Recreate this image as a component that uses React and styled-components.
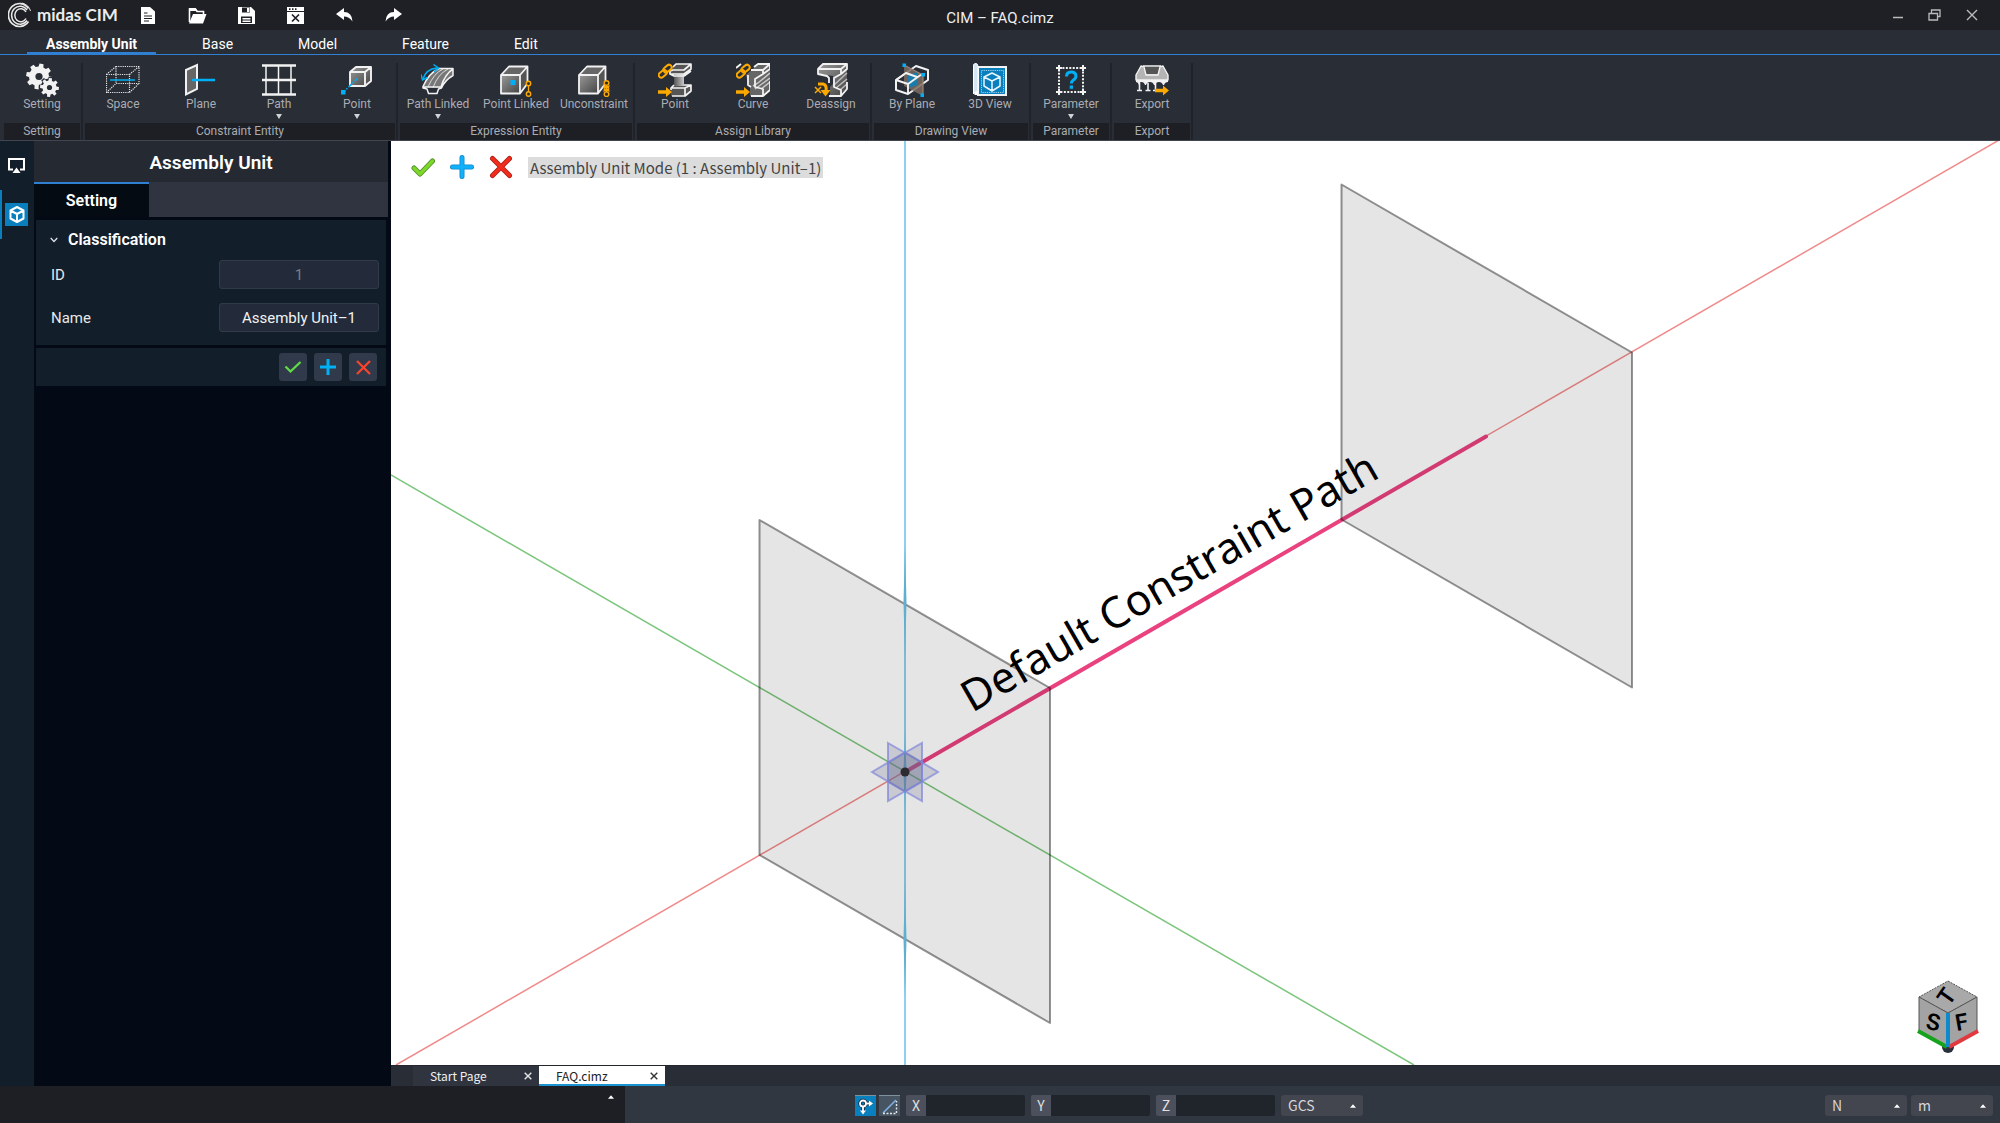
import React from "react";
import styled, { createGlobalStyle } from "styled-components";

const ui = `Roboto, "Noto Sans CJK KR", sans-serif`;
const doc = `"Noto Sans CJK KR", "Noto Sans", sans-serif`;
const scene = `"Noto Sans", "Open Sans", sans-serif`;

const c = {
  title: "#1f2025",
  bar: "#292d36",
  line: "#2f7fd3",
  caption: "#1e1f24",
  label: "#a9acb2",
  rail: "#131e2b",
  panel: "#030a16",
  card: "#131e2b",
  field: "#232b3a",
  fieldLine: "#303a49",
  status: "#313741",
  accent: "#0a7fbd",
  cyan: "#00b0f6",
  orange: "#fba800",
};

const Global = createGlobalStyle`
  *, *::before, *::after { box-sizing: border-box; }
  html, body { margin: 0; }
  body { background: ${c.panel}; font-family: ${ui}; color: #fff; overflow: hidden; }
  button, input, select { font: inherit; color: inherit; margin: 0; padding: 0; border: 0; background: none; border-radius: 0; }
  svg { display: block; flex: none; }
`;

const Shell = styled.div`
  display: flex;
  flex-direction: column;
  height: 100vh;
`;

/* ---------- title bar ---------- */

const TitleBar = styled.header`
  display: grid;
  grid-template-columns: 1fr auto 1fr;
  align-items: center;
  height: 30px;
  flex: none;
  background: ${c.title};
`;
const TitleLeft = styled.div`
  display: flex;
  align-items: center;
  padding-left: 8px;
`;
const Brand = styled.div`
  display: flex;
  align-items: center;
  gap: 5px;
  width: 116px;
  font: 700 17px/20px Lato, sans-serif;
  color: #ececec;
  white-space: nowrap;
`;
const QuickBar = styled.div`
  display: flex;
`;
const QuickButton = styled.button`
  display: flex;
  justify-content: center;
  width: 49px;
  height: 20px;
`;
const DocTitle = styled.h1`
  margin: 0;
  padding-top: 6px;
  font-size: 15px;
  line-height: 20px;
  font-weight: 400;
  color: #eee;
`;
const WindowButtons = styled.div`
  display: flex;
  justify-content: flex-end;
  padding-right: 10px;
`;
const WindowButton = styled.button`
  display: flex;
  align-items: center;
  justify-content: center;
  width: 37px;
  height: 28px;
`;

/* ---------- menu ---------- */

const Menu = styled.nav`
  display: flex;
  gap: 27px;
  height: 25px;
  flex: none;
  padding-left: 27px;
  background: ${c.bar};
  border-bottom: 1px solid ${c.line};
`;
const MenuItem = styled.button`
  height: 24px;
  padding: 6px 19px 0;
  font-size: 14px;
  line-height: 16px;
  font-weight: ${(p) => (p.$on ? 700 : 400)};
  border-bottom: 2px solid ${(p) => (p.$on ? c.line : "transparent")};
`;

/* ---------- ribbon ---------- */

const Ribbon = styled.div`
  display: flex;
  height: 86px;
  flex: none;
  padding: 8px 0 0 3px;
  background: ${c.bar};
  border-bottom: 1px solid #41454f;
`;
const Group = styled.section`
  display: flex;
  flex-direction: column;
  height: 77px;
  margin-right: 1px;
  border-right: 2px solid #20232a;
`;
const Tools = styled.div`
  display: flex;
  flex: 1;
`;
const Caption = styled.h2`
  margin: 0 1px;
  background: ${c.caption};
  color: ${c.label};
  font-size: 12px;
  line-height: 17px;
  font-weight: 400;
  text-align: center;
`;
const Tool = styled.button`
  display: flex;
  flex-direction: column;
  align-items: center;
  width: 78px;
  height: 59px;
  color: ${c.label};
  font-size: 12px;
  line-height: 14px;
  white-space: nowrap;
`;
const ToolText = styled.span`
  padding-bottom: 3px;
`;

/* ---------- body ---------- */

const Body = styled.div`
  display: flex;
  flex: 1;
  min-height: 0;
`;
const Rail = styled.nav`
  width: 34px;
  flex: none;
  background: ${c.rail};
`;
const RailButton = styled.button`
  display: flex;
  align-items: center;
  width: 100%;
  height: 49px;
  padding-left: 3px;
  border-left: 2px solid ${(p) => (p.$on ? c.accent : "transparent")};
`;
const RailIcon = styled.span`
  display: flex;
  align-items: center;
  justify-content: center;
  width: 23px;
  height: 23px;
  background: ${(p) => (p.$on ? c.accent : "none")};
`;
const Panel = styled.aside`
  display: flex;
  flex-direction: column;
  width: 357px;
  flex: none;
  padding-right: 3px;
  background: ${c.panel};
`;
const PanelTitle = styled.h2`
  margin: 0;
  padding-top: 2px;
  background: #252932;
  font-size: 19px;
  line-height: 39px;
  font-weight: 600;
  text-align: center;
`;
const PanelTabs = styled.div`
  display: flex;
  height: 35px;
  flex: none;
  background: #2f3440;
`;
const PanelTab = styled.button`
  width: 115px;
  background: #040b13;
  border-top: 2px solid ${c.line};
  font-size: 16px;
  line-height: 20px;
  font-weight: 600;
`;
const Card = styled.section`
  display: flex;
  flex-direction: column;
  margin: 3px 2px 0;
  padding: ${(p) => p.$pad};
  background: ${c.card};
`;
const CardTitle = styled.button`
  display: flex;
  align-items: center;
  gap: 10px;
  font-size: 16px;
  line-height: 20px;
  font-weight: 600;
`;
const Fields = styled.div`
  display: grid;
  gap: 14px;
  padding: 10px 0 0 1px;
`;
const Field = styled.label`
  display: grid;
  grid-template-columns: 1fr 160px;
  align-items: center;
  font-size: 15px;
  line-height: 20px;
  color: #e8e8e8;
`;
const FieldInput = styled.input`
  width: 100%;
  height: 29px;
  text-align: center;
  font-size: 15px;
  background: ${c.field};
  border: 1px solid ${c.fieldLine};
  border-radius: 3px;
  color: #f2f2f2;
  &:disabled { color: #767d88; }
`;
const CardActions = styled.div`
  display: flex;
  justify-content: flex-end;
  gap: 7px;
`;
const ActionButton = styled.button`
  display: flex;
  align-items: center;
  justify-content: center;
  width: 28px;
  height: 28px;
  background: #303a4a;
  border-radius: 3px;
`;

/* ---------- viewport ---------- */

const Work = styled.main`
  display: flex;
  flex-direction: column;
  flex: 1;
  min-width: 0;
`;
const Viewport = styled.div`
  position: relative;
  flex: 1;
  min-height: 0;
  background: #fff;
`;
const Scene = styled.svg`
  position: absolute;
  inset: 0;
  width: 100%;
  height: 100%;
`;
const Cube = styled.svg`
  position: absolute;
  right: 20px;
  bottom: 11px;
`;
const ModeBar = styled.div`
  position: absolute;
  top: 14px;
  left: 20px;
  display: flex;
  align-items: center;
  gap: 15px;
`;
const ModeButton = styled.button`
  width: 24px;
  height: 24px;
`;
const ModeText = styled.span`
  padding: 0 2px;
  background: #dcdcdc;
  color: #444;
  font: 400 15px/21px ${doc};
  white-space: nowrap;
`;

const FileTabs = styled.div`
  display: flex;
  height: 21px;
  flex: none;
  padding-left: 22px;
  background: ${c.bar};
  border-top: 1px solid #23262e;
`;
const FileTab = styled.div`
  display: flex;
  align-items: center;
  justify-content: space-between;
  width: 126px;
  padding: 1px 7px 0 17px;
  font: 400 12px/17px ${doc};
  color: ${(p) => (p.$on ? "#222" : "#f0f0f0")};
  background: ${(p) => (p.$on ? "#fff" : "#30343f")};
  border-bottom: 2px solid ${(p) => (p.$on ? "#1b93d0" : "transparent")};
`;
const FileClose = styled.button`
  width: 8px;
  height: 8px;
`;

/* ---------- status bar ---------- */

const StatusBar = styled.footer`
  display: flex;
  height: 37px;
  flex: none;
  background: ${c.status};
`;
const Console = styled.div`
  display: flex;
  justify-content: flex-end;
  width: 625px;
  flex: none;
  padding: 9px 11px;
  background: ${c.caption};
`;
const StatusRow = styled.div`
  display: flex;
  flex: 1;
  padding: 9px 7px 7px 230px;
  gap: 6px;
`;
const Snaps = styled.div`
  display: flex;
  gap: 3px;
`;
const SnapButton = styled.button`
  display: flex;
  align-items: center;
  justify-content: center;
  width: 21px;
  height: 21px;
  border-top: 1px solid #7f919c;
  background: ${(p) => (p.$on ? c.accent : "#465561")};
`;
const Coord = styled.label`
  display: flex;
  height: 21px;
  font: 400 14px/21px ${doc};
  color: #e2e2e2;
`;
const CoordName = styled.span`
  width: 20px;
  text-align: center;
  background: #4b505c;
  border-radius: 2px 0 0 2px;
`;
const CoordInput = styled.input`
  width: 99px;
  padding: 0 4px;
  background: #20242b;
  border-radius: 0 2px 2px 0;
`;
const Units = styled.div`
  display: flex;
  gap: 4px;
  margin-left: auto;
`;
const Pick = styled.span`
  position: relative;
  display: flex;
  height: 21px;
`;
const Select = styled.select`
  appearance: none;
  width: 82px;
  padding-left: 7px;
  background: #43454f;
  border-radius: 3px;
  font: 400 14px/21px ${doc};
  color: #d4d6da;
`;
const PickCaret = styled.svg`
  position: absolute;
  right: 7px;
  top: 9px;
  pointer-events: none;
`;

/* ---------- icons ---------- */

const Icon = ({ children }) => (
  <svg width="34" height="34" viewBox="0 0 34 34" fill="none" aria-hidden="true">
    {children}
  </svg>
);

function gearPath(cx, cy, outer, inner, teeth, turn) {
  const step = (Math.PI * 2) / teeth;
  const pts = [];
  for (let i = 0; i < teeth; i++) {
    const a = i * step + turn;
    [[-0.32, inner], [-0.2, outer], [0.2, outer], [0.32, inner]].forEach(([k, r]) => {
      pts.push(`${(cx + Math.cos(a + k * step) * r).toFixed(2)} ${(cy + Math.sin(a + k * step) * r).toFixed(2)}`);
    });
  }
  return `M${pts.join("L")}Z`;
}

/* Shared by the solid icons; lives in the first icon of the ribbon. */
const Steel = () => (
  <defs>
    <linearGradient id="steel" x1="0" y1="0" x2="1" y2="1">
      <stop offset="0" stopColor="#999" />
      <stop offset="1" stopColor="#444" />
    </linearGradient>
    <linearGradient id="web" x1="0" y1="0" x2="1" y2="0">
      <stop offset="0" stopColor="#555" />
      <stop offset="1" stopColor="#c8c8c8" />
    </linearGradient>
  </defs>
);

const Chain = () => (
  <g stroke={c.orange} strokeWidth="2">
    <rect x="-4.5" y="-2.6" width="9" height="5.2" rx="2.6" transform="translate(4.8 10.8) rotate(-40)" />
    <rect x="-4.5" y="-2.6" width="9" height="5.2" rx="2.6" transform="translate(9.6 5.6) rotate(-40)" />
  </g>
);
const Arrow = ({ x, y }) => (
  <path transform={`translate(${x} ${y})`} d="M0 3.200h8V0l6 5-6 5V6.800H0z" fill={c.orange} />
);
const Block = () => (
  <>
    <path d="M2 12h19v18.500H2z" fill="url(#steel)" />
    <path d="M2 12l8-8.500h18.500L21 12z" fill="#666" />
    <path d="M21 12l7.500-8.500v17L21 30.500z" fill="#555" />
    <path d="M2 12h19v18.500H2zM2 12l8-8.500h18.500v17L21 30.500M21 12l7.500-8.500" stroke="#f2f2f2" strokeWidth="1.800" strokeLinejoin="round" />
  </>
);

const icons = {
  setting: (
    <Icon>
      <Steel />
      <path d={gearPath(14, 13.5, 13, 10, 8, 0.2)} fill="#f2f2f2" />
      <circle cx="14" cy="13.500" r="3.600" fill={c.bar} />
      <path d={gearPath(24.5, 24.5, 11, 9, 8, 0.1)} fill={c.bar} />
      <path d={gearPath(24.5, 24.5, 9.5, 7, 8, 0.1)} fill="#f2f2f2" />
      <circle cx="24.500" cy="24.500" r="2.600" fill={c.bar} />
    </Icon>
  ),
  space: (
    <Icon>
      <path d="M.5 11.500h23v18H.5zM10 3.500h23v17H10zM.5 11.500l9.500-8M23.500 11.500l9.500-8M.5 29.500l9.500-9M23.500 29.500l9.500-9" stroke="#e8e8e8" strokeWidth="1.200" strokeDasharray="1.200 1" />
      <path d="M4 17h25" stroke={c.cyan} strokeWidth="1.500" />
    </Icon>
  ),
  plane: (
    <Icon>
      <path d="M2 7l11-5v24L2 31.500z" fill="#666" stroke="#f2f2f2" strokeWidth="2" />
      <path d="M8 17h23" stroke={c.cyan} strokeWidth="2.500" />
    </Icon>
  ),
  path: (
    <Icon>
      <path d="M4 3v29M16.500 3v29M29 3v29" stroke="#f2f2f2" strokeWidth="1.500" />
      <path d="M0 2.500h34M0 17h34M0 31.500h34" stroke="#f2f2f2" strokeWidth="2.600" />
    </Icon>
  ),
  point: (
    <Icon>
      <path d="M10 9l6-5h15v14l-6 5H10z" fill="url(#steel)" />
      <path d="M10 9h15v14H10zM10 9l6-5h15v14l-6 5M25 9l6-5" stroke="#f2f2f2" strokeWidth="1.900" strokeLinejoin="round" />
      <path d="M17.500 15.500L3 29.500" stroke={c.cyan} strokeWidth="1.600" strokeDasharray="4 1.500 1.500 1.500" />
      <path d="M1 27h4.500v4.500H1z" fill={c.cyan} />
    </Icon>
  ),
  pathLinked: (
    <Icon>
      <path d="M2 24Q8 10 18 6h14v7Q24 18 20 25z" fill="#777" />
      <path d="M7 24Q13 10 22 6M12 24.500Q17 11 27 6" stroke="#ddd" />
      <path d="M2 23.500Q8 10 18 5.500h14v7Q24 17 20.500 25l-3 1-1.500 4.500H7.500L6 26l-4-1zM2 24h18Q24 11 32 6" stroke="#f2f2f2" strokeWidth="1.500" strokeLinejoin="round" />
      <path d="M2 16Q5 6 16 5" stroke={c.cyan} strokeWidth="1.500" />
      <path d="M0 11.500l1.500 5.500 5-2.500M12.500 1.500l5 3.500-4.500 4" stroke={c.cyan} strokeWidth="1.500" />
    </Icon>
  ),
  pointLinked: (
    <Icon>
      <Block />
      <path d="M11.500 17h5v5h-5z" fill={c.cyan} />
      <path d="M29.500 21v10" stroke={c.orange} strokeWidth="1.300" />
      <circle cx="29.500" cy="20.500" r="2.200" fill={c.bar} stroke={c.orange} strokeWidth="1.400" />
      <circle cx="29.500" cy="31" r="2.200" fill={c.bar} stroke={c.orange} strokeWidth="1.400" />
    </Icon>
  ),
  unconstraint: (
    <Icon>
      <Block />
      <path d="M26.500 22.500l6 6M32.500 22.500l-6 6" stroke={c.orange} strokeWidth="1.300" />
      <path d="M29.500 21v10" stroke={c.orange} />
      <circle cx="29.500" cy="20" r="2.300" fill={c.bar} stroke={c.orange} strokeWidth="1.400" />
      <circle cx="29.500" cy="31.200" r="2.300" fill={c.bar} stroke={c.orange} strokeWidth="1.400" />
      <circle cx="29.500" cy="25.600" r="2.300" stroke={c.orange} strokeWidth="1.200" />
    </Icon>
  ),
  assignPoint: (
    <Icon>
      <path d="M12 7L18 1h15v5l-7 5v11l7 1v5l-6 5H13v-8l3-3V12l-4-2z" fill="#555" />
      <path d="M16 11h10v12H16z" fill="url(#web)" />
      <path d="M15 4l3-3h15v5l-7 5H12V8l3-1h11l7-6M12 11l4 2h10l7-5M16 22l-3 3v2M26 22h7v6l-6 5H14M14 25h13l6-3M27 25v8" stroke="#f2f2f2" strokeWidth="1.700" strokeLinejoin="round" />
      <Chain />
      <Arrow x="0" y="24" />
    </Icon>
  ),
  assignCurve: (
    <Icon>
      <path d="M10 12L22 1h12v26l-8 6H14V23l-2-3z" fill="#666" />
      <path d="M17 23l5-3 12-10M19 26l15-11M25 26l9-7" stroke="#c8c8c8" strokeWidth="1.500" />
      <path d="M0 5l5-4M18 4l4-3h12l-7 6H15M27 7v4l-8 5v8l8 2v7H15M27 33l7-6V18M27 11l7-5V1M12 12v10l3 2" stroke="#f2f2f2" strokeWidth="1.800" strokeLinejoin="round" />
      <Chain />
      <Arrow x="0" y="24" />
    </Icon>
  ),
  deassign: (
    <Icon>
      <path d="M4 7l6-6h23v25l-6 7H16v-9l3-3v-8L4 11z" fill="url(#steel)" />
      <path d="M20 22l13-12M22 25l11-9M26 27l7-6" stroke="#bbb" strokeWidth="1.600" />
      <path d="M4 6l5-5h24l-6 5H4v5l9 2 2 2v5M27 6v5l-7 4v9l7 3v6H15M27 11l6-5V1M27 33l6-7v-7" stroke="#f2f2f2" strokeWidth="1.800" strokeLinejoin="round" />
      <path d="M1 24l6 6M7 24l-6 6" stroke={c.orange} strokeWidth="1.500" />
      <path d="M4 21h5q4 1 3 7" stroke={c.orange} strokeWidth="3" />
      <path d="M6.500 27h10l-5 6.500z" fill={c.orange} />
    </Icon>
  ),
  byPlane: (
    <Icon>
      <path d="M1 17L21 3l12 4v10L13 31 1 27z" stroke="#f2f2f2" strokeWidth="2" strokeLinejoin="round" />
      <path d="M9 2l19 10v21L9 23z" fill="#7b6c62" fillOpacity=".85" />
      <path d="M13 12l10-3v13l-10 3z" fill="#1b7cab" />
      <path d="M1 17l12 4 14-10M13 21v10M1 17l10-7 11 4" stroke="#f2f2f2" strokeWidth="1.900" strokeLinejoin="round" />
      <path d="M9 2l19 10v21" stroke="#9a8577" strokeWidth="1.200" />
      <path d="M7.500.5h3.500V4H7.500zM26.500 10H30v3.500h-3.500zM25.500 30.500H29V34h-3.500z" fill={c.cyan} />
    </Icon>
  ),
  view3d: (
    <Icon>
      <path d="M5 4h28v28H5z" fill="#0a7fbd" stroke="#f2f2f2" strokeWidth="2" />
      <path d="M8.500 7.500h22v22h-22z" stroke="#9fd4ee" strokeDasharray="1.200 1" />
      <path d="M.5 3Q0 .5 3 .5 5 .5 5 4v25H3q-2.500 0-2.500 2z" fill="#d5e5f4" stroke="#fff" />
      <path d="M1 31q.5-3 4-3v4H2z" fill="#fff" />
      <path d="M19 10l8 4v9l-8 5-8-5v-9zM11 14l8 4 8-4M19 18v10" stroke="#eaf6ff" strokeWidth="1.500" strokeLinejoin="round" />
    </Icon>
  ),
  parameter: (
    <Icon>
      <path d="M5 5h24v24H5z" stroke="#f2f2f2" strokeWidth="2" strokeDasharray="2 1.430" />
      <path d="M2 5h6M5 2v6M26 5h6M29 2v6M2 29h6M5 26v6M26 29h6M29 26v6" stroke="#f2f2f2" strokeWidth="2" />
      <path d="M12.500 13.500q0-4.500 4.700-4.500t4.700 4q0 2.500-2.500 4-2 1.300-2 3.500" stroke={c.cyan} strokeWidth="3" />
      <path d="M15.700 22.500h3.300v3.300h-3.300z" fill={c.cyan} />
    </Icon>
  ),
  export: (
    <Icon>
      <path d="M1 12l5-9 3 2 2 6h12l2-6 3-2 5 9v5H1z" fill="#b4b4b4" />
      <path d="M9 4h16l-2 7H11z" fill="#555" />
      <path d="M1 12l5-9 3 1 2 8h12l2-8 3-1 5 9v5H1zM8 3h18" stroke="#f2f2f2" strokeWidth="1.400" strokeLinejoin="round" />
      <path d="M1 17h32v2q-3 0-4 3h-1q-1-3-4-3t-4 3h-1q-1-3-4-3t-4 3h-1q-1-3-3.500-3T5 22H4q-1-3-3-3z" fill="#f2f2f2" />
      <path d="M4.500 20v8M13 20v8M20.500 20v8M2 27.500h5M10.500 27.500h5M18 27.500h4" stroke="#f2f2f2" strokeWidth="1.600" />
      <Arrow x="20" y="22.500" />
    </Icon>
  ),
};

const Down = () => (
  <svg width="6" height="5" viewBox="0 0 6 5" aria-hidden="true">
    <path d="M0 0h6L3 5z" fill="#d0d2d6" />
  </svg>
);

const quick = [
  ["New", <>
    <path d="M2 2h9l5 4.500V19H2z" fill="#fff" />
    <path d="M5 8h3.500M5 11h8M5 13.500h8M5 16h5" stroke={c.title} strokeWidth="1.200" />
  </>],
  ["Open", <>
    <path d="M1.500 17V4h6l1.500 2.500h6.500V9" fill="none" stroke="#fff" strokeWidth="1.600" />
    <path d="M5 9h13.500L15 18.500H1z" fill="#fff" />
    <path d="M1 3h6.500l2 3H1z" fill="#fff" />
  </>],
  ["Save", <>
    <path d="M1 2h13l4 4v13H1z" fill="#fff" />
    <path d="M5 2.500h8v5H5zM4 11.500h11V18H4z" fill={c.title} />
    <path d="M10 3h2.500v4H10zM5.500 13h8v1.500h-8zM5.500 15.500h8V17h-8z" fill="#fff" />
  </>],
  ["Close project", <>
    <path d="M1 2h17v17H1z" fill="#fff" />
    <path d="M1 6.500h17" stroke={c.title} />
    <path d="M3 4.200h1.500M6 4.200h1.500M9 4.200h1.500M6 9.500l7 7M13 9.500l-7 7" stroke={c.title} strokeWidth="1.700" />
  </>],
  ["Undo", <path d="M1 9l8-6v4q8 0 8.500 9.500Q14 11.500 9 11.500V15z" fill="#fff" />],
  ["Redo", <path d="M18 9l-8-6v4q-8 0-8.500 9.500Q5 11.500 10 11.500V15z" fill="#fff" />],
];

const groups = [
  ["Setting", [["setting", "Setting"]]],
  ["Constraint Entity", [["space", "Space"], ["plane", "Plane"], ["path", "Path", true], ["point", "Point", true]]],
  ["Expression Entity", [["pathLinked", "Path Linked", true], ["pointLinked", "Point Linked"], ["unconstraint", "Unconstraint"]]],
  ["Assign Library", [["assignPoint", "Point"], ["assignCurve", "Curve"], ["deassign", "Deassign"]]],
  ["Drawing View", [["byPlane", "By Plane"], ["view3d", "3D View"]]],
  ["Parameter", [["parameter", "Parameter", true]]],
  ["Export", [["export", "Export"]]],
];

const Caret = () => <path d="M0 4l3.500-4L7 4z" fill="#fff" />;

const Dropdown = ({ label, value }) => (
  <Pick>
    <Select aria-label={label} defaultValue={value}>
      <option>{value}</option>
    </Select>
    <PickCaret width="6" height="4" viewBox="0 0 7 4" aria-hidden="true">
      <Caret />
    </PickCaret>
  </Pick>
);

const CloseMark = ({ color }) => (
  <svg width="8" height="8" viewBox="0 0 8 8" aria-hidden="true">
    <path d="M.7.7l6.600 6.600M7.300.7L.7 7.300" stroke={color} strokeWidth="1.400" />
  </svg>
);

/* Isometric scene; the origin of the axes is at (513, 631). */
const Drawing = () => (
  <Scene viewBox="-1 0 1609 924" preserveAspectRatio="xMidYMid slice" aria-label="Model view">
    <g fill="none">
      <path d="M-1 334L1022 924" stroke="#7cc57c" strokeWidth="1.500" />
      <path d="M4 924L1608 -1.500" stroke="#f08a8a" strokeWidth="1.500" />
      <path d="M513 0v924" stroke="#8fd0ee" strokeWidth="2" />
      <path d="M513 631L1094 295.500" stroke="#ea417f" strokeWidth="4" strokeLinecap="round" />
    </g>
    <g fill="#000" fillOpacity=".1" stroke="#000" strokeOpacity=".42" strokeWidth="2" strokeLinejoin="round">
      <path d="M367.500 379L658 547v335L367.500 714z" />
      <path d="M949.500 43.500L1240 211.500v335L949.500 378.500z" />
    </g>
    <path d="M513 405l1.500 56-1.500 56-1.500-56zM513 590l1.500 41-1.500 41-1.500-41zM513 742l1.500 56-1.500 56-1.500-56z" fill="#5fb0d0" />
    <g transform="translate(513 631)" fill="#66688c" fillOpacity=".22" stroke="#7f86da" strokeOpacity=".7" strokeWidth="2">
      <path d="M-33 0L0-19.500 33 0 0 19.500z" />
      <path d="M-17-29L17-9.500V29L-17 9.500z" />
      <path d="M17-29V9.500L-17 29V-9.500z" />
      <circle r="4.500" fill="#2b2b30" fillOpacity="1" stroke="none" />
    </g>
    <text transform="translate(580 572) rotate(-30)" fontFamily={scene} fontSize="43" fill="#000">
      Default Constraint Path
    </text>
  </Scene>
);

const NavCube = () => (
  <Cube width="64" height="76" viewBox="0 0 64 76" aria-label="View cube">
    <circle cx="32" cy="69" r="6" fill="#2a303c" />
    <g stroke="#555" strokeWidth="1">
      <path d="M32 3l29 16-29 16L3 19z" fill="#a9a9a9" strokeDasharray="2 1" />
      <path d="M3 19l29 16v34L3 53z" fill="#a3a3a3" />
      <path d="M61 19L32 35v34l29-16z" fill="#a3a3a3" />
    </g>
    <path d="M2 53l29 16" stroke="#14a31a" strokeWidth="4" />
    <path d="M62 53L33 69" stroke="#e03a40" strokeWidth="4" />
    <path d="M32 35v34" stroke="#0c8acb" strokeWidth="4" />
    <g fontFamily={ui} fontSize="23" fontWeight="600" fill="#000" textAnchor="middle">
      <text transform="translate(16 52) rotate(10)">S</text>
      <text transform="translate(47 52) rotate(-10)">F</text>
      <text transform="translate(37 23) rotate(-55)">T</text>
    </g>
  </Cube>
);

export default function App() {
  return (
    <Shell>
      <Global />
      <TitleBar>
        <TitleLeft>
          <Brand>
            <svg width="24" height="26" viewBox="0 0 24 26" fill="none" stroke="#e8e8e8" aria-hidden="true">
              <path d="M20.500 6.500A11 11.500 0 1 0 20.500 19.500" strokeWidth="1.700" />
              <path d="M19 8A8.500 9 0 1 0 19 18.500" strokeWidth="1.500" />
              <path d="M18 10A6 6.500 0 1 0 18 16.500" strokeWidth="1.500" />
              <path d="M14 1Q21 3 22.500 9" strokeWidth="1" />
            </svg>
            <span>midas CIM</span>
          </Brand>
          <QuickBar>
            {quick.map(([name, art]) => (
              <QuickButton key={name} aria-label={name}>
                <svg width="19" height="20" viewBox="0 0 19 20" aria-hidden="true">
                  {art}
                </svg>
              </QuickButton>
            ))}
          </QuickBar>
        </TitleLeft>
        <DocTitle>CIM – FAQ.cimz</DocTitle>
        <WindowButtons>
          <WindowButton aria-label="Minimize">
            <svg width="12" height="12" viewBox="0 0 12 12"><path d="M1 8.500h10" stroke="#bbb" strokeWidth="1.500" /></svg>
          </WindowButton>
          <WindowButton aria-label="Restore">
            <svg width="13" height="12" viewBox="0 0 13 12" fill="none" stroke="#bbb" strokeWidth="1.300">
              <path d="M1 4.500h8.500v6.500H1zM3.500 4.500V1H12v6.500H9.500" />
            </svg>
          </WindowButton>
          <WindowButton aria-label="Close">
            <svg width="12" height="12" viewBox="0 0 12 12"><path d="M1 1l10 10M11 1L1 11" stroke="#bbb" strokeWidth="1.400" /></svg>
          </WindowButton>
        </WindowButtons>
      </TitleBar>

      <Menu>
        {["Assembly Unit", "Base", "Model", "Feature", "Edit"].map((m, i) => (
          <MenuItem key={m} $on={i === 0}>{m}</MenuItem>
        ))}
      </Menu>

      <Ribbon>
        {groups.map(([name, tools]) => (
          <Group key={name}>
            <Tools>
              {tools.map(([icon, text, more]) => (
                <Tool key={icon}>
                  {icons[icon]}
                  <ToolText>{text}</ToolText>
                  {more && <Down />}
                </Tool>
              ))}
            </Tools>
            <Caption>{name}</Caption>
          </Group>
        ))}
      </Ribbon>

      <Body>
        <Rail>
          <RailButton aria-label="Display">
            <RailIcon>
              <svg width="17" height="16" viewBox="0 0 17 16" fill="none">
                <path d="M5 11.500H1V1h15v10.500h-4" stroke="#fff" strokeWidth="2" />
                <path d="M8.500 9.500l4 5.500h-8z" fill="#fff" />
              </svg>
            </RailIcon>
          </RailButton>
          <RailButton $on aria-label="Assembly">
            <RailIcon $on>
              <svg width="16" height="17" viewBox="0 0 16 17" fill="none" stroke="#fff" strokeWidth="2" strokeLinejoin="round">
                <path d="M8 1l6.500 3.500v8L8 16l-6.500-3.500v-8zM1.500 4.500L8 8l6.500-3.500M8 8v8" />
              </svg>
            </RailIcon>
          </RailButton>
        </Rail>

        <Panel>
          <PanelTitle>Assembly Unit</PanelTitle>
          <PanelTabs>
            <PanelTab>Setting</PanelTab>
          </PanelTabs>
          <Card $pad="10px 7px 13px 14px">
            <CardTitle>
              <svg width="8" height="6" viewBox="0 0 8 6" fill="none" aria-hidden="true">
                <path d="M.7 1L4 4.500 7.300 1" stroke="#dde" strokeWidth="1.300" />
              </svg>
              Classification
            </CardTitle>
            <Fields>
              <Field>
                ID
                <FieldInput disabled defaultValue="1" />
              </Field>
              <Field>
                Name
                <FieldInput defaultValue="Assembly Unit–1" />
              </Field>
            </Fields>
          </Card>
          <Card $pad="5px 9px 5px">
            <CardActions>
              <ActionButton aria-label="Apply">
                <svg width="18" height="14" viewBox="0 0 18 14" fill="none"><path d="M1.500 6.500l5 5L16.500 2" stroke="#5fdc45" strokeWidth="2.300" /></svg>
              </ActionButton>
              <ActionButton aria-label="Add">
                <svg width="16" height="16" viewBox="0 0 16 16"><path d="M0 8h16M8 0v16" stroke={c.cyan} strokeWidth="3" /></svg>
              </ActionButton>
              <ActionButton aria-label="Cancel">
                <svg width="15" height="15" viewBox="0 0 15 15"><path d="M1 1l13 13M14 1L1 14" stroke="#f7442e" strokeWidth="2.300" /></svg>
              </ActionButton>
            </CardActions>
          </Card>
        </Panel>

        <Work>
          <Viewport>
            <Drawing />
            <ModeBar>
              <ModeButton aria-label="Apply">
                <svg width="24" height="24" viewBox="0 0 24 24" fill="none" strokeLinecap="round" strokeLinejoin="round">
                  <path d="M3 13l6 6L21.500 6" stroke="#4c8c22" strokeWidth="5" />
                  <path d="M3 13l6 6L21.500 6" stroke="#7ed62c" strokeWidth="3.400" />
                </svg>
              </ModeButton>
              <ModeButton aria-label="Add">
                <svg width="24" height="24" viewBox="0 0 24 24" fill="none" strokeLinecap="round">
                  <path d="M2.500 12h19M12 2.500v19" stroke="#128acb" strokeWidth="5" />
                  <path d="M2.500 12h19M12 2.500v19" stroke="#11b0fb" strokeWidth="3.400" />
                </svg>
              </ModeButton>
              <ModeButton aria-label="Cancel">
                <svg width="24" height="24" viewBox="0 0 24 24" fill="none" strokeLinecap="round">
                  <path d="M3.500 3.500l17 17M20.500 3.500l-17 17" stroke="#a81c12" strokeWidth="5" />
                  <path d="M3.500 3.500l17 17M20.500 3.500l-17 17" stroke="#f02c1c" strokeWidth="3.400" />
                </svg>
              </ModeButton>
              <ModeText>Assembly Unit Mode (1 : Assembly Unit–1)</ModeText>
            </ModeBar>
            <NavCube />
          </Viewport>
          <FileTabs>
            <FileTab>
              Start Page
              <FileClose aria-label="Close Start Page"><CloseMark color="#e6e6e6" /></FileClose>
            </FileTab>
            <FileTab $on>
              FAQ.cimz
              <FileClose aria-label="Close FAQ.cimz"><CloseMark color="#333" /></FileClose>
            </FileTab>
          </FileTabs>
        </Work>
      </Body>

      <StatusBar>
        <Console>
          <svg width="6" height="4" viewBox="0 0 7 4" aria-hidden="true"><Caret /></svg>
        </Console>
        <StatusRow>
          <Snaps>
            <SnapButton $on aria-label="Point snap">
              <svg width="17" height="17" viewBox="0 0 17 17" fill="none">
                <g stroke="#123" strokeWidth="3.500"><circle cx="6" cy="5.500" r="3" /><path d="M9 5.500h5M6 8.500v6" /></g>
                <g stroke="#fff" strokeWidth="1.800"><circle cx="6" cy="5.500" r="3" /><path d="M9 5.500h4M6 8.500v5" /></g>
                <path d="M12 2.500l4 3-4 3zM3 12.500h6l-3 4z" fill="#fff" />
              </svg>
            </SnapButton>
            <SnapButton aria-label="Line snap">
              <svg width="17" height="17" viewBox="0 0 17 17" fill="none">
                <path d="M2 15L15 2" stroke="#7fb0e6" strokeWidth="1.600" />
                <path d="M2 15.500h13.500V3" stroke="#e4e8ec" strokeWidth="1.400" strokeDasharray="2 1.500" />
              </svg>
            </SnapButton>
          </Snaps>
          {["X", "Y", "Z"].map((axis) => (
            <Coord key={axis}>
              <CoordName>{axis}</CoordName>
              <CoordInput />
            </Coord>
          ))}
          <Dropdown label="Coordinate system" value="GCS" />
          <Units>
            <Dropdown label="Force unit" value="N" />
            <Dropdown label="Length unit" value="m" />
          </Units>
        </StatusRow>
      </StatusBar>
    </Shell>
  );
}
